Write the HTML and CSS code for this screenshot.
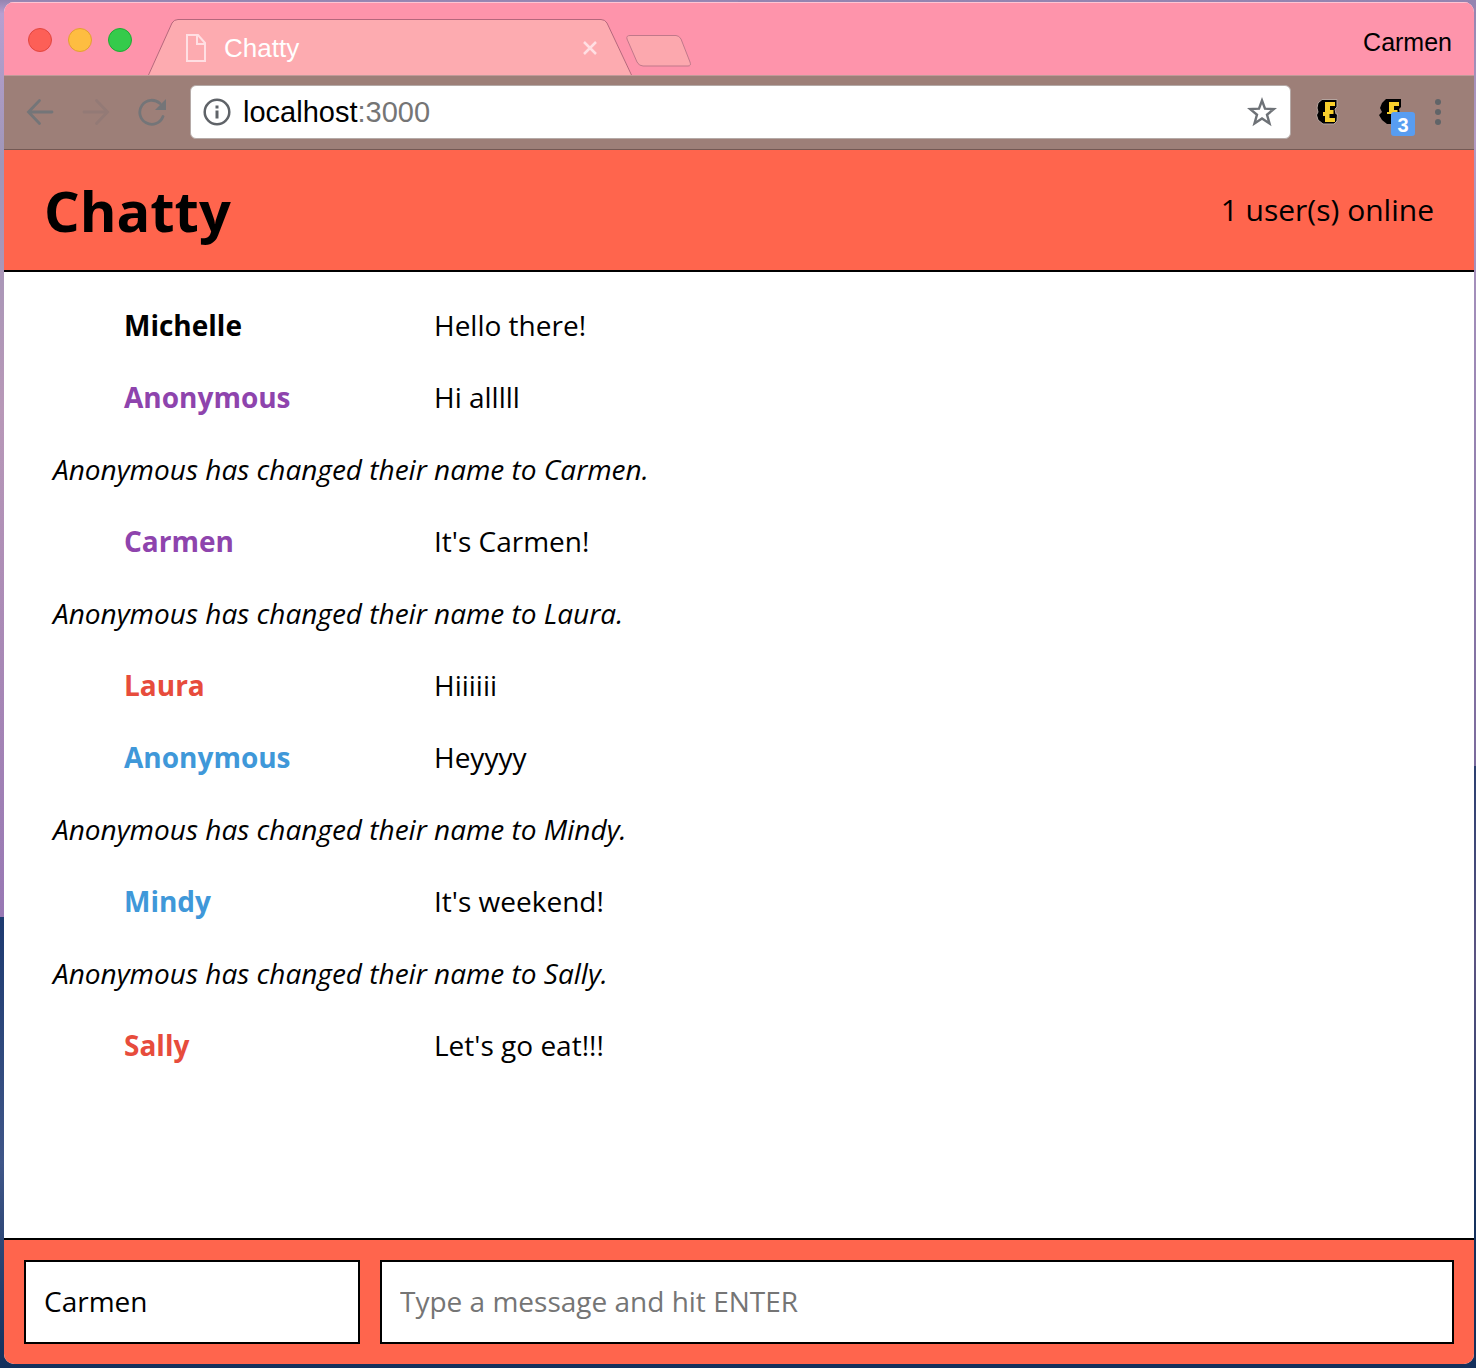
FILE: index.html
```html
<!DOCTYPE html>
<html lang="en">
<head>
<meta charset="utf-8">
<title>Chatty</title>
<link rel="stylesheet" href="styles.css">
</head>
<body>
<div class="window">
  <div class="tabstrip">
    <div class="lights">
      <button class="light light-close" aria-label="Close window"></button>
      <button class="light light-min" aria-label="Minimize window"></button>
      <button class="light light-max" aria-label="Maximize window"></button>
    </div>
    <div class="tab">
      <svg class="tab-shape" viewBox="0 0 484 56" preserveAspectRatio="none" aria-hidden="true">
        <path d="M0 56 L24 4 Q26 .5 30 .5 H453 Q457 .5 459 4 L484 56Z" fill="#fdabb0"/>
        <path d="M.5 56 L24 4 Q26 .5 30 .5 H453 Q457 .5 459 4 L483.500 56" fill="none" stroke="#b5677c"/>
      </svg>
      <svg class="page-icon" viewBox="0 0 20 28" aria-hidden="true">
        <path d="M1 1H12L19 9V27H1Z M11 1V10H19" fill="none" stroke="#ffdfe3" stroke-width="2"/>
      </svg>
      <span class="tab-title">Chatty</span>
      <button class="tab-close" aria-label="Close tab">
        <svg width="14" height="14" viewBox="0 0 14 14"><path d="M1 1 13 13M13 1 1 13" stroke="#ffdfe3" stroke-width="2.500" fill="none"/></svg>
      </button>
    </div>
    <button class="new-tab" aria-label="New tab">
      <svg width="66" height="32" viewBox="0 0 66 32"><path d="M4 .5H50Q53 .5 55 4L64 27Q65.500 31 62 31H17Q13 31 11 27L1 4Q0 .5 4 .5Z" fill="#fca8ae" stroke="#c0788a"/></svg>
    </button>
    <button class="profile">Carmen</button>
  </div>

  <div class="toolbar">
    <div class="nav">
      <button class="icon-button" aria-label="Back">
        <svg width="28" height="28" viewBox="0 0 28 28"><path d="M26 14H3M13.500 2.500 2.500 14 13.500 25.500" stroke="#747578" stroke-width="2.800" stroke-linecap="round" fill="none"/></svg>
      </button>
      <button class="icon-button" aria-label="Forward">
        <svg width="28" height="28" viewBox="0 0 28 28"><path d="M2 14H25M14.500 2.500 25.500 14 14.500 25.500" stroke="#937a76" stroke-width="2.800" stroke-linecap="round" fill="none"/></svg>
      </button>
      <button class="icon-button" aria-label="Reload">
        <svg width="28" height="28" viewBox="0 0 28 28"><path d="M25 18.500A12 12 0 1 1 22 5.500" stroke="#747578" stroke-width="2.800" stroke-linecap="round" fill="none"/><path d="M28 1V12H17Z" fill="#747578"/></svg>
      </button>
    </div>
    <div class="address">
      <svg width="28" height="28" viewBox="0 0 28 28" aria-hidden="true"><circle cx="14" cy="14" r="12.300" fill="none" stroke="#5f6368" stroke-width="2.500"/><path d="M12.500 7.500h3v3h-3zM12.500 12.500h3v8h-3z" fill="#5f6368"/></svg>
      <span class="url">localhost<span class="port">:3000</span></span>
      <button class="icon-button" aria-label="Bookmark">
        <svg width="30" height="30" viewBox="0 0 30 30"><path d="M15 3.500 18 11.700 27 12 20 17.700 22.500 26.500 15 21.500 7.500 26.500 10 17.700 3 12 12 11.700Z" fill="none" stroke="#6e7277" stroke-width="2.400"/></svg>
      </button>
    </div>
    <div class="extensions">
      <button class="icon-button" aria-label="Extension">
        <svg width="24" height="28" viewBox="0 0 24 28"><path d="M7 1.500H22V9L20 11 21 16H22.500L22 23 19 26H8L3 22 1.500 17 3 14 2 10 3 5Z" fill="#000" stroke="#b5a49e"/><path d="M10 4H20V8H15V12H18.500V16H14.500V20H20V24H10V18H8V14H10Z" fill="#f8cf2c"/></svg>
      </button>
      <button class="icon-button badge-holder" aria-label="Extension, 3 notifications">
        <svg width="24" height="28" viewBox="0 0 24 28"><path d="M7 1H22V9L20 11 21 16H22.500L22 23 19 26H8L3 22 0 17 3 14 1 10 3 5Z" fill="#000"/><path d="M10 4H20V8H15V12H18.500V16H8V14H10Z" fill="#f8cf2c"/></svg>
        <span class="badge">3</span>
      </button>
      <button class="icon-button" aria-label="Menu">
        <svg width="6" height="28" viewBox="0 0 6 28"><g fill="#606468"><circle cx="3" cy="4" r="3"/><circle cx="3" cy="14" r="3"/><circle cx="3" cy="24" r="3"/></g></svg>
      </button>
    </div>
  </div>

  <header class="app-header">
    <h1 class="brand">Chatty</h1>
    <span class="online">1 user(s) online</span>
  </header>

  <main class="messages">
    <div class="message"><span class="author">Michelle</span><span>Hello there!</span></div>
    <div class="message"><span class="author purple">Anonymous</span><span>Hi alllll</span></div>
    <div class="notice">Anonymous has changed their name to Carmen.</div>
    <div class="message"><span class="author purple">Carmen</span><span>It's Carmen!</span></div>
    <div class="notice">Anonymous has changed their name to Laura.</div>
    <div class="message"><span class="author red">Laura</span><span>Hiiiiii</span></div>
    <div class="message"><span class="author blue">Anonymous</span><span>Heyyyy</span></div>
    <div class="notice">Anonymous has changed their name to Mindy.</div>
    <div class="message"><span class="author blue">Mindy</span><span>It's weekend!</span></div>
    <div class="notice">Anonymous has changed their name to Sally.</div>
    <div class="message"><span class="author red">Sally</span><span>Let's go eat!!!</span></div>
  </main>

  <footer class="chatbar">
    <input class="field name-field" type="text" value="Carmen" aria-label="Your name">
    <input class="field message-field" type="text" placeholder="Type a message and hit ENTER" aria-label="Message">
  </footer>
</div>
</body>
</html>
```
FILE: styles.css
```css
* {
  box-sizing: border-box;
}

body {
  margin: 0;
  min-height: 100vh;
  display: flex;
  padding: 2px 2px 4px 4px;
  font: 28px/40px "Open Sans", sans-serif;
  color: #000;
  background:
    linear-gradient(#9484b0, #b09ac4 10%, #7a6a9c 56%, #2c3f70 56%, #5b5482 70%, #14305c 90%) right / 50% 100% no-repeat,
    linear-gradient(#9484b0, #b79fd0 1%, #9f96b8 12%, #b898b8 30%, #9878b4 67%, #1d3a70 67%, #3f5688 85%, #14305c) left / 50% 100% no-repeat;
}

button {
  padding: 0;
  border: 0;
  background: none;
  font: inherit;
  color: inherit;
}

svg {
  display: block;
}

.window {
  flex: 1;
  min-width: 0;
  display: flex;
  flex-direction: column;
  border-radius: 10px;
  overflow: hidden;
  background: #fff;
}

/* Browser tabs */
.tabstrip {
  display: flex;
  height: 74px;
  background: #fe94ab;
  border-top: 1px solid #ffc4d2;
  border-bottom: 1px solid #c09a98;
  font-family: "Liberation Sans", Arial, sans-serif;
}

.lights {
  display: flex;
  gap: 16px;
  padding: 25px 16px 0 24px;
}

.light {
  width: 24px;
  height: 24px;
  border: 1px solid #e2463f;
  border-radius: 50%;
  background: #fd5f57;
}

.light-min {
  border-color: #e39d34;
  background: #febd41;
}

.light-max {
  border-color: #1fa834;
  background: #35cb4b;
}

.tab {
  position: relative;
  display: flex;
  align-items: center;
  align-self: flex-end;
  width: 484px;
  height: 56px;
  padding: 2px 35px 0 38px;
}

.tab-shape {
  position: absolute;
  inset: 0;
  width: 100%;
  height: 100%;
}

.page-icon {
  position: relative;
  width: 20px;
  height: 28px;
}

.tab-title {
  position: relative;
  flex: 1;
  margin-left: 18px;
  font-size: 26px;
  color: #fff;
}

.tab-close {
  position: relative;
}

.new-tab {
  align-self: flex-end;
  margin: 0 0 8px -6px;
}

.profile {
  margin-left: auto;
  padding: 5px 22px 0 0;
  font-size: 25px;
}

/* Browser toolbar */
.toolbar {
  display: flex;
  align-items: center;
  gap: 24px;
  height: 74px;
  padding: 0 33px 2px 22px;
  background: #9d7f78;
  border-bottom: 1px solid #735954;
}

.nav {
  display: flex;
  gap: 28px;
}

.address {
  flex: 1;
  display: flex;
  align-items: center;
  gap: 12px;
  height: 54px;
  padding: 0 13px 0 12px;
  border: 1px solid #b5aaa7;
  border-radius: 6px;
  background: #fff;
  font-family: "Liberation Sans", Arial, sans-serif;
  font-size: 29px;
}

.url {
  flex: 1;
}

.port {
  color: #757575;
}

.extensions {
  display: flex;
  align-items: center;
  gap: 40px;
}

.extensions .icon-button:last-child {
  margin-left: -8px;
}

.badge-holder {
  position: relative;
}

.badge {
  position: absolute;
  left: 12px;
  top: 14px;
  width: 24px;
  height: 24px;
  border-radius: 3px;
  background: #589df1;
  color: #fff;
  font: bold 20px/27px "Liberation Sans", Arial, sans-serif;
  text-align: center;
}

/* Chat page */
.app-header {
  display: flex;
  align-items: center;
  justify-content: space-between;
  height: 122px;
  padding: 0 40px;
  background: #ff654d;
  border-bottom: 2px solid #000;
}

.brand {
  margin: 0;
  font-size: 56px;
  line-height: 72px;
}

.online {
  font-size: 30px;
}

.messages {
  flex: 1;
  padding: 17px 49px;
}

.message {
  display: flex;
  padding: 16px 71px;
}

.author {
  width: 310px;
  font-weight: bold;
}

.notice {
  padding: 16px 0;
  font-style: italic;
}

.purple {
  color: #8e44ad;
}

.red {
  color: #e74c3c;
}

.blue {
  color: #3f98d9;
}

.chatbar {
  display: flex;
  gap: 20px;
  padding: 20px;
  background: #ff654d;
  border-top: 2px solid #000;
}

.field {
  min-width: 0;
  height: 84px;
  padding: 0 18px 2px;
  border: 2px solid #000;
  border-radius: 0;
  background: #fff;
  font: inherit;
  color: #000;
}

.field::placeholder {
  color: #757575;
}

.name-field {
  flex: 0 0 336px;
}

.message-field {
  flex: 1;
}
```
